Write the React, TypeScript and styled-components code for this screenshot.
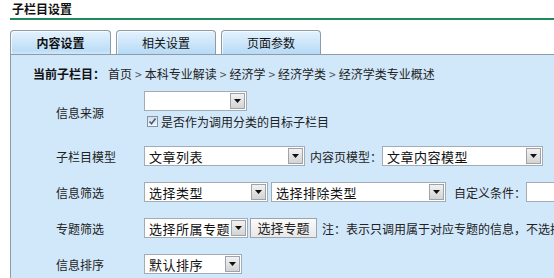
import React from 'react'
import styled, { createGlobalStyle } from 'styled-components'

const GlobalStyle = createGlobalStyle`
  html, body {
    margin: 0;
    padding: 0;
    overflow: hidden;
    background: #fff;
  }
  body {
    font-family: "Noto Sans CJK SC", "Liberation Sans", sans-serif;
    font-size: 12px;
    color: #222;
  }
`

const Page = styled.div`
  width: 820px;
  height: 278px;
  overflow: hidden;
`

const Header = styled.div`
  margin-left: 10px;
  padding: 1px 0 0 2px;
  height: 17px;
  line-height: 16px;
  font-weight: bold;
  font-size: 12px;
  color: #111;
  border-bottom: 2px solid #1d8a5b;
`

const TabBar = styled.div`
  display: flex;
  gap: 5px;
  margin: 10px 0 0 10px;
  position: relative;
  z-index: 1;
`

const Tab = styled.div<{ active?: boolean; w: number }>`
  width: ${({ w }) => w}px;
  height: 24px;
  box-sizing: border-box;
  border: 1px solid #8f9ba6;
  border-bottom: none;
  border-radius: 4px 4px 0 0;
  background: ${({ active }) =>
    active
      ? 'linear-gradient(#e4f2fd, #bcdef8 85%, #cfe7fa)'
      : 'linear-gradient(#e4f2fd, #b6daf6)'};
  text-align: center;
  line-height: 23px;
  font-size: 12px;
  font-weight: ${({ active }) => (active ? 'bold' : 'normal')};
  color: #111;
  margin-bottom: ${({ active }) => (active ? '-1px' : '0')};
  padding-bottom: ${({ active }) => (active ? '1px' : '0')};
  box-shadow: inset 1px 1px 0 rgba(255, 255, 255, 0.7);
`

const Panel = styled.div`
  margin-left: 10px;
  border-top: 1px solid #8f9ba6;
  border-left: 1px solid #8f9ba6;
  background: #d1e8fb;
  padding: 12px 0 0 22px;
  min-height: 240px;
`

const Crumbs = styled.div`
  line-height: 14px;
  font-size: 12px;
  white-space: nowrap;
  color: #222;
  b {
    color: #111;
    margin-right: 3px;
  }
`

const Sep = styled.span`
  color: #555;
  margin: 0 3px;
`

const Row = styled.div<{ first?: boolean }>`
  display: flex;
  align-items: center;
  margin-left: 23px;
  min-height: 36px;
  margin-top: ${({ first }) => (first ? '10px' : '0')};
  padding-bottom: ${({ first }) => (first ? '10px' : '0')};
  white-space: nowrap;
`

const Label = styled.div<{ shift?: number }>`
  width: 88px;
  flex: none;
  font-size: 12px;
  color: #222;
  padding-top: ${({ shift }) => shift || 0}px;
`

const Controls = styled.div`
  display: flex;
  align-items: center;
`

const Stack = styled.div`
  display: flex;
  flex-direction: column;
  gap: 4px;
`

const SelectBox = styled.div<{ w: number }>`
  width: ${({ w }) => w}px;
  height: 20px;
  box-sizing: border-box;
  border: 1px solid #a3abb4;
  background: #fff;
  display: flex;
  align-items: center;
  justify-content: space-between;
  padding: 0 1px 0 4px;
  font-size: 13px;
  letter-spacing: 0.5px;
  color: #111;
  flex: none;
`

const Arrow = styled.div`
  width: 15px;
  height: 16px;
  box-sizing: border-box;
  border: 1px solid #9da3aa;
  background: linear-gradient(#f2f2f2, #d3d3d3);
  display: flex;
  align-items: center;
  justify-content: center;
`

const Inline = styled.span<{ ml?: number }>`
  margin-left: ${({ ml }) => ml || 0}px;
  font-size: 12px;
  color: #222;
`

const Check = styled.label`
  display: flex;
  align-items: center;
  gap: 3px;
  margin-left: 3px;
  line-height: 13px;
  font-size: 12px;
  color: #222;
`

const Box = styled.span`
  width: 11px;
  height: 11px;
  box-sizing: border-box;
  border: 1px solid #7e95ad;
  background: linear-gradient(#dcdcdc, #f6f6f6);
  display: flex;
  align-items: center;
  justify-content: center;
`

const TextInput = styled.div`
  width: 60px;
  height: 20px;
  box-sizing: border-box;
  border: 1px solid #a3abb4;
  border-right: none;
  background: #fff;
  flex: none;
`

const Button = styled.div`
  width: 67px;
  height: 20px;
  box-sizing: border-box;
  margin-left: 2px;
  border: 1px solid #9ca3ab;
  background: linear-gradient(#fafafa, #e8e8e8);
  text-align: center;
  line-height: 18px;
  font-size: 13px;
  color: #222;
  flex: none;
`

function Select({ w, text = '' }: { w: number; text?: string }) {
  return (
    <SelectBox w={w}>
      <span>{text}</span>
      <Arrow>
        <svg width="7" height="4" viewBox="0 0 7 4">
          <path d="M0 0h7L3.5 4z" fill="#111" />
        </svg>
      </Arrow>
    </SelectBox>
  )
}

export default function App() {
  const path = ['首页', '本科专业解读', '经济学', '经济学类', '经济学类专业概述']
  return (
    <Page>
      <GlobalStyle />
      <Header>子栏目设置</Header>
      <TabBar>
        <Tab active w={101}>内容设置</Tab>
        <Tab w={100}>相关设置</Tab>
        <Tab w={100}>页面参数</Tab>
      </TabBar>
      <Panel>
        <Crumbs>
          <b>当前子栏目：</b>
          {path.map((p, i) => (
            <React.Fragment key={p}>
              {i > 0 && <Sep>&gt;</Sep>}
              {p}
            </React.Fragment>
          ))}
        </Crumbs>

        <Row first>
          <Label shift={6}>信息来源</Label>
          <Stack>
            <Select w={103} />
            <Check>
              <Box>
                <svg width="9" height="9" viewBox="0 0 9 9">
                  <path d="M1.5 4.5l2 2.2L7.5 1.5" stroke="#3a5f8a" strokeWidth="1.6" fill="none" />
                </svg>
              </Box>
              是否作为调用分类的目标子栏目
            </Check>
          </Stack>
        </Row>

        <Row>
          <Label>子栏目模型</Label>
          <Controls>
            <Select w={161} text="文章列表" />
            <Inline ml={5}>内容页模型：</Inline>
            <Select w={161} text="文章内容模型" />
          </Controls>
        </Row>

        <Row>
          <Label>信息筛选</Label>
          <Controls>
            <Select w={124} text="选择类型" />
            <Inline ml={3} />
            <Select w={175} text="选择排除类型" />
            <Inline ml={8}>自定义条件：</Inline>
            <TextInput />
          </Controls>
        </Row>

        <Row>
          <Label>专题筛选</Label>
          <Controls>
            <Select w={104} text="选择所属专题" />
            <Button>选择专题</Button>
            <Inline ml={5}>注：表示只调用属于对应专题的信息，不选择则调用全部信息</Inline>
          </Controls>
        </Row>

        <Row>
          <Label>信息排序</Label>
          <Controls>
            <Select w={98} text="默认排序" />
          </Controls>
        </Row>
      </Panel>
    </Page>
  )
}
